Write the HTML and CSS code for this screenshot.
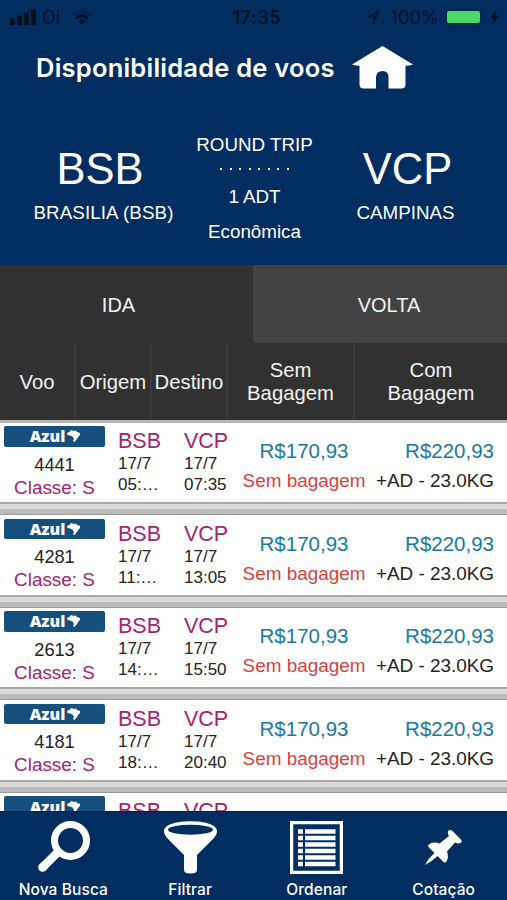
FILE: index.html
```html
<!DOCTYPE html>
<html lang="pt-BR">

<head>
    <meta charset="UTF-8">
    <meta name="viewport" content="width=device-width, initial-scale=1.0">
    <title>Disponibilidade de voos</title>
    <link rel="stylesheet" href="styles.css">
</head>

<body>
    <!-- status bar -->
    <div class="status">
        <div class="status-left">
            <svg class="signal" viewBox="0 0 26 16" width="26" height="16">
                <rect x="0" y="9" width="5" height="7" rx="1.5"/>
                <rect x="7" y="6.500" width="5" height="9.500" rx="1.500"/>
                <rect x="14" y="3.500" width="5" height="12.500" rx="1.500"/>
                <rect x="21" y="0" width="5" height="16" rx="1.500"/>
            </svg>
            <span class="carrier">Oi</span>
            <svg class="wifi" viewBox="0 0 20 15" width="20" height="15">
                <path d="M1 5.500Q10 -3 19 5.500" fill="none" stroke="#02244c" stroke-width="2.500"/>
                <path d="M4 8.500Q10 2.500 16 8.500" fill="none" stroke="#02101f" stroke-width="3"/>
                <path d="M6.500 11.200Q10 8 13.500 11.200L10 14.800z"/>
            </svg>
        </div>
        <div class="clock">17:35</div>
        <div class="status-right">
            <svg viewBox="0 0 14 14" width="14" height="14"><path d="M14 0L0 7.500L7 7.800L7.500 14z"/><path d="M11 3L4.500 6.500L8 7z" fill="#012d61"/></svg>
            <span class="percent">100%</span>
            <span class="battery"></span>
            <svg class="bolt" viewBox="0 0 9 14" width="9" height="14"><path d="M6 0L0 8H3.800L2.500 14L9 5.500H5z"/></svg>
        </div>
    </div>

    <header>
        <h1>Disponibilidade de voos</h1>
        <svg class="home" viewBox="0 0 61 43" width="61" height="43">
            <path d="M30.500 0L61 18.500Q57 20 53.500 19.500V38.500Q53.500 42.500 49.500 42.500H36.500V31Q36.500 25 30.500 25T24 31V42.500H11.500Q7.500 42.500 7.500 38.500V19.500Q4 20 0 18.500z"/>
        </svg>
    </header>

    <!-- search summary -->
    <section class="trip">
        <div class="place from">
            <div class="code">BSB</div>
            <div class="city">BRASILIA (BSB)</div>
        </div>
        <div class="details">
            <div>ROUND TRIP</div>
            <div class="dots"><i></i><i></i><i></i><i></i><i></i><i></i><i></i><i></i></div>
            <div class="adt">1 ADT</div>
            <div>Econômica</div>
        </div>
        <div class="place to">
            <div class="code">VCP</div>
            <div class="city">CAMPINAS</div>
        </div>
    </section>

    <nav class="direction">
        <div class="active">IDA</div>
        <div>VOLTA</div>
    </nav>

    <div class="columns">
        <div>Voo</div>
        <div>Origem</div>
        <div>Destino</div>
        <div>Sem<br>Bagagem</div>
        <div>Com<br>Bagagem</div>
    </div>

    <main class="flights"></main>

    <!-- bottom menu -->
    <footer>
        <div class="tab">
            <svg viewBox="0 0 53 53" width="53" height="53">
                <circle cx="33.500" cy="19.500" r="16" fill="none" stroke="#fff" stroke-width="7"/>
                <path d="M21 31L5 47" stroke="#fff" stroke-width="8.500"/>
                <path d="M7 45L5.500 46.500" stroke="#fff" stroke-width="8.500" stroke-linecap="round"/>
            </svg>
            <span>Nova Busca</span>
        </div>
        <div class="tab">
            <svg viewBox="0 0 53 53" width="53" height="53">
                <path d="M0 10C0 -3 53 -3 53 10Q53 14 49 18L33 34V49Q33 52.500 26.500 52.500T20 49V34L4 18Q0 14 0 10z" fill="#fff"/>
                <ellipse cx="26.500" cy="8.800" rx="22.500" ry="5" fill="#012d61"/>
            </svg>
            <span>Filtrar</span>
        </div>
        <div class="tab">
            <svg viewBox="0 0 53 53" width="53" height="53">
                <rect x="1.500" y="1.500" width="50" height="50" fill="none" stroke="#fff" stroke-width="3.500"/>
                <path d="M8 10.500h5M15 10.500h30.500M8 17h5M15 17h30.500M8 23.500h5M15 23.500h30.500M8 30h5M15 30h30.500M8 36.500h5M15 36.500h30.500M8 43h5M15 43h30.500" stroke="#fff" stroke-width="4.500"/>
            </svg>
            <span>Ordenar</span>
        </div>
        <div class="tab">
            <svg viewBox="0 0 53 53" width="53" height="53">
                <path d="M31.500 9.500Q34 8 36.500 11L43.500 18Q46 20.500 43.500 22Q41 23 38 21.500L30 30.500Q32 36 29.500 40.500Q28 42.500 26 40.500L20.500 35Q15 40.500 8 44Q11.500 37 17.500 32L12 26.500Q10 24.500 12.500 23Q17 20.500 22.500 22.500L32 15Q30 12 31.500 9.500z" fill="#fff"/>
            </svg>
            <span>Cotação</span>
        </div>
    </footer>

    <script>
        const flights = [
            { number: '4441', departure: '05:…', arrival: '07:35' },
            { number: '4281', departure: '11:…', arrival: '13:05' },
            { number: '2613', departure: '14:…', arrival: '15:50' },
            { number: '4181', departure: '18:…', arrival: '20:40' },
            { number: '', departure: '', arrival: '' }
        ];
        const list = document.querySelector('.flights');

        flights.forEach((flight) => {
            const row = document.createElement('article');
            row.className = 'flight';
            row.innerHTML = `
                <div class="company">
                    <div class="logo">Azul<svg viewBox="0 0 13 12" width="13" height="12"><path d="M0 3L3 1.500L4 0L7 1L9 0.500L10 2L13 3V5L11 7L10 9L7.500 12L6 11L7 9L5.500 6.500L3 5.500L0.500 5z"/></svg></div>
                    <div class="number">${flight.number}</div>
                    <div class="class">${flight.number ? 'Classe: S' : ''}</div>
                </div>
                <div class="stop">
                    <div class="airport">BSB</div>
                    <div>${flight.number ? '17/7' : ''}</div>
                    <div>${flight.departure}</div>
                </div>
                <div class="stop">
                    <div class="airport">VCP</div>
                    <div>${flight.number ? '17/7' : ''}</div>
                    <div>${flight.arrival}</div>
                </div>
                <div class="fare">
                    <div class="price">${flight.number ? 'R$170,93' : ''}</div>
                    <div class="no-bag">${flight.number ? 'Sem bagagem' : ''}</div>
                </div>
                <div class="fare with-bag">
                    <div class="price">${flight.number ? 'R$220,93' : ''}</div>
                    <div>${flight.number ? '+AD - 23.0KG' : ''}</div>
                </div>`;
            list.appendChild(row);
        });
    </script>
</body>

</html>
```

FILE: styles.css
```css
* {
    padding: 0;
    margin: 0;
    box-sizing: border-box;
}

body {
    width: 507px;
    height: 900px;
    display: flex;
    flex-direction: column;
    overflow: hidden;
    background-color: #012d61;
    color: #fff;
    font-family: "Liberation Sans", Arial, sans-serif;
    white-space: nowrap;
}

.status {
    height: 34px;
    display: grid;
    grid-template-columns: 1fr 60px 1fr;
    align-items: center;
    padding: 0 8px 0 10px;
    color: #02101f;
    fill: #02101f;
    font-family: Inter, sans-serif;
    font-size: 18px;
}

.status-left,
.status-right {
    display: flex;
    align-items: center;
}

.status-right {
    justify-content: flex-end;
}

.carrier {
    margin: 0 12px 0 6px;
}

.clock {
    padding-left: 5px;
    text-align: center;
    font-weight: 600;
    letter-spacing: 0.6px;
}

.percent {
    margin: 0 6px 0 10px;
    letter-spacing: 0.2px;
}

.battery {
    width: 37px;
    height: 16px;
    border: 2px solid #02284f;
    border-radius: 4px;
    background-color: #4cd964;
}

.bolt {
    margin-left: 8px;
}

header {
    height: 68px;
    display: flex;
    align-items: center;
    padding-left: 36px;
    gap: 17px;
    border-bottom: 1px solid #032b56;
}

header h1 {
    width: 299px;
    font-family: Inter, sans-serif;
    font-size: 25.5px;
    font-weight: 600;
    letter-spacing: 0.22px;
}

.home {
    fill: #fff;
}

.trip {
    height: 163px;
    display: grid;
    grid-template-columns: 207px 95px 205px;
    font-size: 18.8px;
    text-align: center;
}

.place {
    padding-top: 42px;
}

.place.to {
    padding-left: 2px;
}

.code {
    height: 50px;
    line-height: 50px;
    font-size: 43.5px;
}

.from .code {
    padding-right: 7px;
}

.to .code {
    padding-left: 4px;
}

.city {
    padding-top: 8px;
    line-height: 22px;
}

.from .city {
    letter-spacing: 0.1px;
}

.details {
    display: flex;
    flex-direction: column;
    align-items: center;
    padding-top: 32px;
    line-height: 22px;
}

.dots {
    display: flex;
    gap: 7.6px;
    padding: 12px 0 16px;
}

.dots i {
    width: 2px;
    height: 2px;
    background-color: #fff;
}

.adt {
    margin-bottom: 13px;
}

.direction {
    height: 78px;
    display: grid;
    grid-template-columns: 253px 254px;
    background-color: #424242;
    line-height: 80px;
    font-size: 20px;
    text-align: center;
    color: #f2f2f2;
}

.direction div {
    padding-left: 18px;
}

.direction .active {
    padding: 0 16px 0 0;
    background-color: #313131;
}

.columns {
    height: 77px;
    display: grid;
    grid-template-columns: 76px 76px 76px 127px 152px;
    background-color: #313131;
    font-size: 20.3px;
    line-height: 23px;
    text-align: center;
    color: #f2f2f2;
}

.columns div {
    display: flex;
    align-items: center;
    justify-content: center;
    padding-top: 1px;
    border-right: 2px solid #3b3b3b;
}

.columns div:last-child {
    border: none;
}

.flights {
    flex: 1;
    overflow: hidden;
    border-top: 3px solid #b5b5b5;
    background-color: #fff;
    color: #222;
}

.flight {
    height: 92.6px;
    display: grid;
    grid-template-columns: 118px 66px 54px 132px 137px;
    background: linear-gradient(#aaa 0 2px, #dadada 2px 7px, #bcbcbc 7px 12px, #999 12px) bottom / 100% 13.4px no-repeat #fff;
}

.company {
    padding: 3px 13px 0 4px;
    text-align: center;
}

.logo {
    height: 20.5px;
    display: flex;
    align-items: center;
    justify-content: center;
    gap: 2px;
    padding-left: 1px;
    border-radius: 2px;
    background-color: #144f7d;
    color: #fff;
    fill: #fff;
    font-family: "Open Sans", sans-serif;
    font-size: 16px;
    font-weight: 800;
}

.number {
    padding-top: 8px;
    line-height: 21px;
    font-size: 18.2px;
}

.class {
    padding-top: 1px;
    line-height: 21px;
    font-size: 18.9px;
    color: #a3246f;
}

.stop {
    padding-top: 6px;
    font-size: 17px;
    line-height: 21px;
}

.airport {
    height: 24px;
    line-height: 24px;
    font-size: 21.5px;
    color: #a3246f;
}

.fare {
    padding-top: 16px;
    font-size: 18.9px;
    line-height: 24px;
    text-align: center;
}

.price {
    padding-bottom: 6px;
    font-size: 20.5px;
    color: #197aa0;
}

.no-bag {
    color: #d9413d;
}

.with-bag {
    padding-right: 13px;
    text-align: right;
}

footer {
    height: 89px;
    display: grid;
    grid-template-columns: repeat(4, 1fr);
    border-top: 1px solid #02204a;
}

.tab {
    display: flex;
    flex-direction: column;
    align-items: center;
    padding-top: 9px;
    font-family: Inter, sans-serif;
    font-size: 15.5px;
    font-weight: 500;
}

.tab span {
    margin-top: 5px;
    line-height: 21px;
    letter-spacing: 0.1px;
}
```
